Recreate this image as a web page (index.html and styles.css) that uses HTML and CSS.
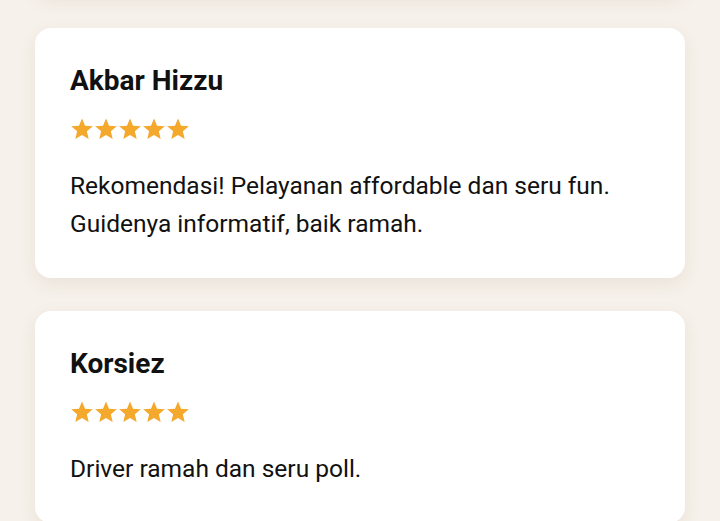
FILE: index.html
```html
<!DOCTYPE html>
<html lang="id">
<head>
<meta charset="utf-8">
<link rel="stylesheet" href="styles.css">
</head>
<body>
<main class="reviews">
  <article class="card card-prev">
    <h3 class="name">Pengunjung</h3>
    <div class="stars"></div>
    <p class="text">Seru sekali.</p>
  </article>
  <article class="card">
    <h3 class="name">Akbar Hizzu</h3>
    <div class="stars" aria-label="5 bintang">
      <svg viewBox="0 0 24 24"><path d="M12 1.5l3 7.2 7.8.6-5.95 5.05 1.85 7.6L12 17.9l-6.7 4.05 1.85-7.6L1.2 9.3 9 8.7z"/></svg>
      <svg viewBox="0 0 24 24"><path d="M12 1.5l3 7.2 7.8.6-5.95 5.05 1.85 7.6L12 17.9l-6.7 4.05 1.85-7.6L1.2 9.3 9 8.7z"/></svg>
      <svg viewBox="0 0 24 24"><path d="M12 1.5l3 7.2 7.8.6-5.95 5.05 1.85 7.6L12 17.9l-6.7 4.05 1.85-7.6L1.2 9.3 9 8.7z"/></svg>
      <svg viewBox="0 0 24 24"><path d="M12 1.5l3 7.2 7.8.6-5.95 5.05 1.85 7.6L12 17.9l-6.7 4.05 1.85-7.6L1.2 9.3 9 8.7z"/></svg>
      <svg viewBox="0 0 24 24"><path d="M12 1.5l3 7.2 7.8.6-5.95 5.05 1.85 7.6L12 17.9l-6.7 4.05 1.85-7.6L1.2 9.3 9 8.7z"/></svg>
    </div>
    <p class="text">Rekomendasi! Pelayanan affordable dan seru fun. Guidenya informatif, baik ramah.</p>
  </article>
  <article class="card">
    <h3 class="name">Korsiez</h3>
    <div class="stars" aria-label="5 bintang">
      <svg viewBox="0 0 24 24"><path d="M12 1.5l3 7.2 7.8.6-5.95 5.05 1.85 7.6L12 17.9l-6.7 4.05 1.85-7.6L1.2 9.3 9 8.7z"/></svg>
      <svg viewBox="0 0 24 24"><path d="M12 1.5l3 7.2 7.8.6-5.95 5.05 1.85 7.6L12 17.9l-6.7 4.05 1.85-7.6L1.2 9.3 9 8.7z"/></svg>
      <svg viewBox="0 0 24 24"><path d="M12 1.5l3 7.2 7.8.6-5.95 5.05 1.85 7.6L12 17.9l-6.7 4.05 1.85-7.6L1.2 9.3 9 8.7z"/></svg>
      <svg viewBox="0 0 24 24"><path d="M12 1.5l3 7.2 7.8.6-5.95 5.05 1.85 7.6L12 17.9l-6.7 4.05 1.85-7.6L1.2 9.3 9 8.7z"/></svg>
      <svg viewBox="0 0 24 24"><path d="M12 1.5l3 7.2 7.8.6-5.95 5.05 1.85 7.6L12 17.9l-6.7 4.05 1.85-7.6L1.2 9.3 9 8.7z"/></svg>
    </div>
    <p class="text">Driver ramah dan seru poll.</p>
  </article>
</main>
</body>
</html>
```
FILE: styles.css
```css
html, body {
  margin: 0;
  padding: 0;
  background: #f6f1ea;
  height: 100%;
  overflow: hidden;
}
body {
  font-family: Roboto, "Liberation Sans", sans-serif;
  color: #111;
}
.reviews {
  display: flex;
  flex-direction: column;
  gap: 33px;
  padding: 0 35px;
  margin-top: -217px;
}
.card {
  background: #fff;
  border-radius: 16px;
  padding: 36px 35px 35px;
  box-shadow: 0 6px 18px rgba(90, 70, 40, 0.08);
}
.card-prev {
  height: 212px;
  box-sizing: border-box;
}
.name {
  margin: 0;
  font-size: 28px;
  line-height: 34px;
  font-weight: 700;
}
.stars {
  display: flex;
  margin-top: 19px;
  height: 24px;
}
.stars svg {
  width: 24px;
  height: 24px;
  fill: #f4a82c;
}
.text {
  margin: 26px 0 0;
  font-size: 24.5px;
  line-height: 38px;
}
```
